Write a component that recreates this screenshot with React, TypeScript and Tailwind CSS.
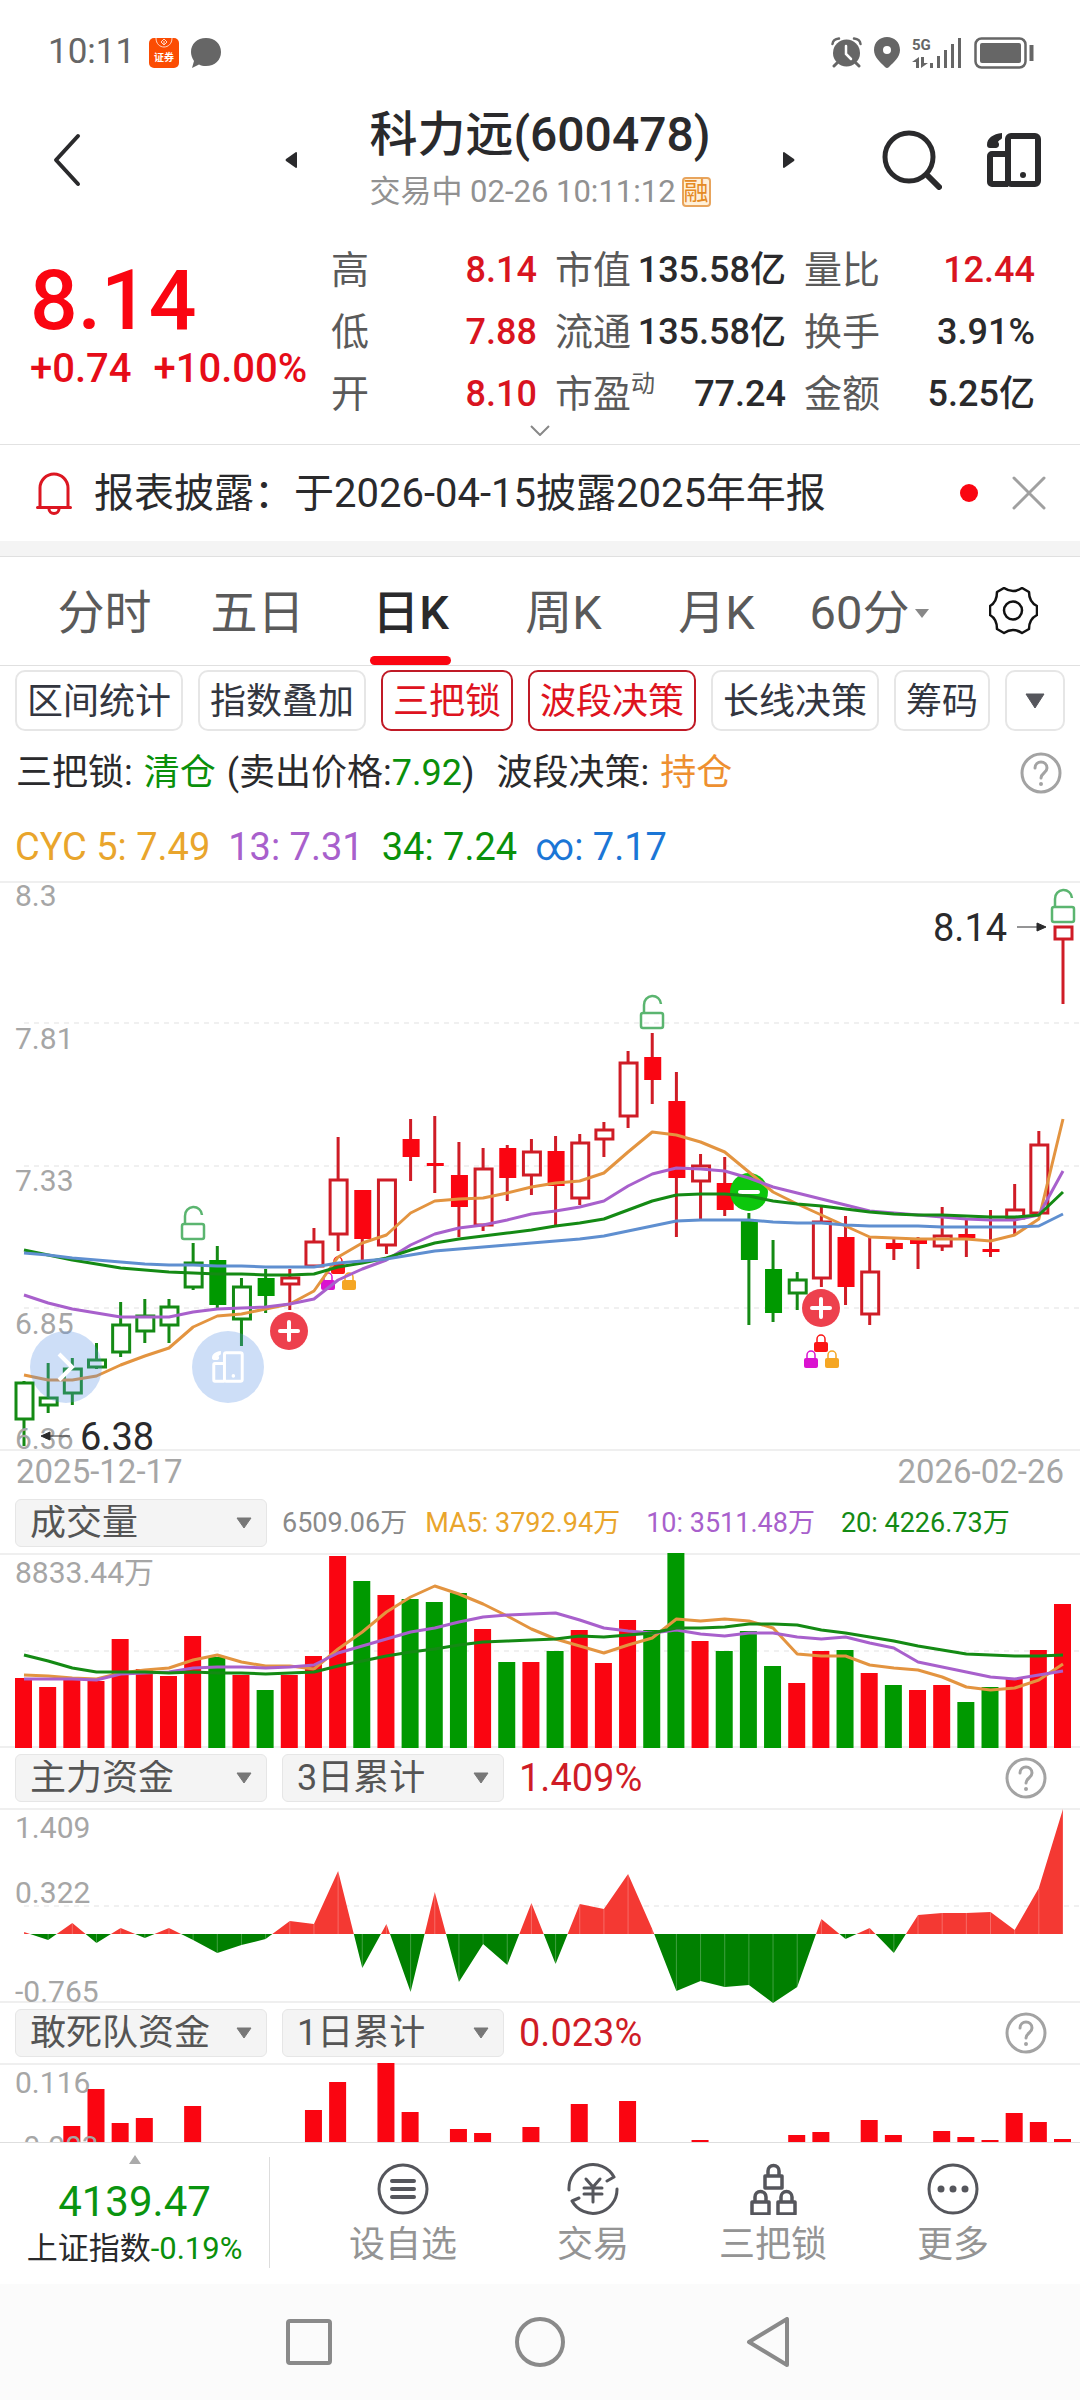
import type { ReactNode } from "react";

const RED = "#fa0511";
const RED_LINE = "#cf1c26";
const GREEN = "#009900";
const GREEN_LINE = "#148a14";
const ORANGE = "#e39440";
const PURPLE = "#a860cc";
const BLUE = "#5f8fd0";

// x of the n-th trading day
const dayX = (i: number) => 24 + (i * 1039) / 43;

type Candle = [kind: string, high: number, top: number, bottom: number, low: number];

// r/g = colour, h = hollow, f = filled
const candles: Candle[] = [
  ["gh", 500, 501, 539, 565],
  ["gh", 482, 516, 525, 532],
  ["gh", 477, 487, 513, 524],
  ["gh", 462, 478, 487, 488],
  ["gh", 421, 443, 472, 476],
  ["gh", 418, 434, 451, 462],
  ["gh", 418, 425, 445, 462],
  ["gh", 362, 381, 407, 409],
  ["gf", 365, 379, 424, 427],
  ["gh", 397, 405, 439, 465],
  ["gf", 388, 397, 415, 432],
  ["rh", 388, 396, 404, 429],
  ["rh", 347, 360, 386, 386],
  ["rh", 256, 298, 354, 370],
  ["rf", 309, 309, 358, 379],
  ["rh", 298, 298, 365, 373],
  ["rf", 238, 258, 276, 300],
  ["rf", 235, 282, 285, 312],
  ["rf", 261, 294, 326, 356],
  ["rh", 267, 287, 345, 350],
  ["rf", 264, 267, 297, 320],
  ["rh", 258, 270, 295, 314],
  ["rf", 255, 270, 305, 345],
  ["rh", 253, 261, 318, 324],
  ["rh", 241, 248, 259, 276],
  ["rh", 170, 181, 236, 247],
  ["rf", 152, 176, 199, 223],
  ["rf", 191, 220, 297, 356],
  ["rh", 273, 284, 301, 340],
  ["rf", 276, 302, 329, 335],
  ["gf", 332, 340, 379, 444],
  ["gf", 359, 388, 432, 441],
  ["gh", 391, 398, 413, 429],
  ["rh", 326, 340, 398, 406],
  ["rf", 335, 356, 406, 424],
  ["rh", 357, 390, 434, 444],
  ["rf", 357, 362, 368, 379],
  ["rf", 356, 358, 363, 388],
  ["rh", 326, 354, 366, 370],
  ["rf", 338, 353, 357, 376],
  ["rf", 329, 368, 371, 376],
  ["rh", 303, 328, 338, 354],
  ["rh", 250, 263, 333, 333],
  ["rh", 45, 45, 59, 123],
];

const cyc5 = [494, 499, 499, 495, 484, 475, 467, 446, 435, 433, 428, 423, 410, 376, 362, 354, 332, 320, 318, 317, 312, 306, 302, 300, 292, 271, 251, 254, 261, 271, 291, 311, 323, 334, 345, 356, 357, 358, 358, 358, 360, 354, 338, 238];
const cyc13 = [414, 422, 428, 432, 436, 436, 436, 431, 428, 427, 426, 423, 418, 399, 388, 379, 364, 353, 347, 344, 339, 333, 330, 326, 320, 305, 293, 287, 288, 290, 297, 306, 312, 318, 324, 330, 332, 334, 336, 338, 339, 339, 334, 290];
const cyc34 = [369, 374, 379, 383, 387, 389, 391, 392, 393, 393, 394, 394, 393, 386, 382, 377, 369, 362, 358, 355, 352, 349, 345, 342, 338, 329, 320, 314, 313, 313, 315, 320, 323, 325, 328, 331, 333, 334, 334, 335, 336, 336, 334, 311];
const cycInf = [372, 374, 377, 379, 381, 383, 384, 384, 385, 385, 386, 386, 386, 382, 380, 378, 374, 370, 368, 366, 364, 362, 360, 358, 355, 350, 345, 340, 339, 339, 339, 341, 342, 342, 344, 345, 345, 345, 346, 346, 346, 346, 345, 333];

const volume = [125, 134, 127, 128, 86, 116, 123, 83, 104, 122, 137, 122, 103, 3, 28, 42, 46, 49, 40, 76, 109, 109, 98, 77, 110, 67, 77, 0, 88, 98, 78, 113, 130, 98, 97, 120, 132, 137, 132, 149, 134, 126, 97, 51];
const volumeDown = [8, 10, 14, 16, 17, 18, 20, 22, 26, 27, 29, 30, 31, 34, 36, 39, 40];
const ma5 = [122, 123, 125, 126, 120, 117, 115, 107, 102, 109, 113, 113, 116, 96, 79, 59, 44, 33, 41, 51, 63, 76, 86, 93, 100, 92, 85, 66, 68, 66, 68, 75, 101, 103, 103, 112, 115, 117, 124, 134, 137, 135, 127, 111];
const ma10 = [126, 126, 126, 127, 121, 120, 119, 115, 114, 114, 115, 114, 112, 100, 93, 86, 79, 75, 69, 64, 62, 61, 60, 67, 75, 78, 80, 77, 81, 83, 80, 80, 84, 86, 84, 90, 95, 109, 114, 119, 124, 126, 122, 118];
const ma20 = [102, 108, 115, 119, 119, 119, 120, 119, 120, 120, 121, 120, 119, 113, 108, 103, 99, 96, 92, 89, 88, 87, 86, 83, 84, 82, 80, 75, 75, 74, 71, 71, 72, 77, 80, 84, 88, 93, 97, 101, 102, 103, 103, 102];

const mainFunds = [124, 132, 115, 135, 120, 130, 120, 132, 145, 137, 131, 113, 116, 63, 160, 116, 184, 84, 174, 136, 157, 95, 156, 96, 101, 66, 121, 183, 173, 179, 177, 195, 179, 111, 131, 120, 145, 107, 105, 105, 104, 122, 80, 1];

const squadFunds: [day: number, top: number][] = [
  [2, 63], [3, 26], [4, 60], [5, 55], [7, 43], [12, 47], [13, 19], [15, 0], [16, 49],
  [18, 66], [19, 70], [21, 64], [23, 41], [25, 38], [28, 77], [32, 72], [33, 69],
  [35, 57], [36, 72], [38, 68], [39, 74], [40, 77], [41, 50], [42, 59], [43, 76],
];

const toPoints = (ys: number[]) => ys.map((y, i) => `${dayX(i)},${y}`).join(" ");

function Curve({ ys, color }: { ys: number[]; color: string }) {
  return <polyline points={toPoints(ys)} fill="none" stroke={color} strokeWidth="3" strokeLinejoin="round" />;
}

function Rule({ y, dashed = false }: { y: number; dashed?: boolean }) {
  return (
    <line
      x1={dashed ? 24 : 0}
      x2="1080"
      y1={y}
      y2={y}
      stroke={dashed ? "#f0f0f0" : "#efefef"}
      strokeWidth="2"
      strokeDasharray={dashed ? "5 5" : undefined}
    />
  );
}

function AxisText({ y, children }: { y: number; children: ReactNode }) {
  return (
    <text x="15" y={y} className="fill-[#a6a6a6] text-[30px]">
      {children}
    </text>
  );
}

function OpenLock({ x, y }: { x: number; y: number }) {
  return (
    <g transform={`translate(${x - 12} ${y})`} fill="none" stroke="#5bb570" strokeWidth="2.500">
      <rect x="1" y="18" width="22" height="15" rx="2" />
      <path d="M4 18V10a8.500 8.500 0 0 1 17 -1" />
    </g>
  );
}

function TinyLock({ x, y, color }: { x: number; y: number; color: string }) {
  return (
    <g transform={`translate(${x - 7} ${y})`}>
      <path d="M3 9V6a4 4 0 0 1 8 0v3" fill="none" stroke={color} strokeWidth="1.500" />
      <rect y="9" width="14" height="10" rx="2" fill={color} />
    </g>
  );
}

function ThreeLocks({ x, y }: { x: number; y: number }) {
  return (
    <>
      <TinyLock x={x} y={y} color="#fb1414" />
      <TinyLock x={x - 10} y={y + 16} color="#da12d0" />
      <TinyLock x={x + 11} y={y + 16} color="#f5a623" />
    </>
  );
}

function TradeMark({ x, y, buy }: { x: number; y: number; buy: boolean }) {
  return (
    <g stroke="#fff" strokeWidth="4" strokeLinecap="round">
      <circle cx={x} cy={y} r="19" fill={buy ? "#ed404d" : "#0cc70c"} stroke="none" />
      <path d={`M${x - 9} ${y}h18`} />
      {buy && <path d={`M${x} ${y - 9}v18`} />}
    </g>
  );
}

function CandleShape({ data: [kind, high, top, bottom, low], x }: { data: Candle; x: number }) {
  const green = kind[0] === "g";
  const hollow = kind[1] === "h";
  const line = green ? GREEN_LINE : RED_LINE;
  return (
    <g>
      <path d={`M${x} ${high}V${top}M${x} ${bottom}V${low}`} stroke={line} strokeWidth="3" />
      {hollow ? (
        <rect x={x - 8} y={top + 1} width="17" height={bottom - top - 2} fill="none" stroke={line} strokeWidth="3" />
      ) : (
        <rect x={x - 8} y={top} width="17" height={bottom - top} fill={green ? GREEN : RED} />
      )}
    </g>
  );
}

function PriceChart() {
  return (
    <svg viewBox="0 0 1080 570" className="block w-full">
      <Rule y={1} />
      <Rule y={142} dashed />
      <Rule y={285} dashed />
      <Rule y={427} dashed />
      <Rule y={569} />
      <AxisText y={25}>8.3</AxisText>
      <AxisText y={168}>7.81</AxisText>
      <AxisText y={310}>7.33</AxisText>
      <AxisText y={453}>6.85</AxisText>
      {candles.map((c, i) => (
        <CandleShape key={i} data={c} x={dayX(i)} />
      ))}
      <OpenLock x={193} y={325} />
      <OpenLock x={652} y={114} />
      <OpenLock x={1063} y={8} />
      <ThreeLocks x={338} y={374} />
      <ThreeLocks x={821} y={452} />
      <TradeMark x={289} y={450} buy />
      <TradeMark x={821} y={427} buy />
      <TradeMark x={749} y={311} buy={false} />
      <Curve ys={cyc5} color={ORANGE} />
      <Curve ys={cyc13} color={PURPLE} />
      <Curve ys={cyc34} color={GREEN_LINE} />
      <Curve ys={cycInf} color={BLUE} />
      <AxisText y={568}>6.36</AxisText>
      <g fill="#2a2a2c" stroke="#2a2a2c">
        <path d="M50 555h20M1017 46h20" />
        <path d="M41 555l9-4v8zM1046 46l-9-4v8z" />
      </g>
      <text x="80" y="569" className="fill-[#2a2a2c] text-[38px]">6.38</text>
      <text x="933" y="60" className="fill-[#2a2a2c] text-[38px]">8.14</text>
    </svg>
  );
}

function VolumeChart() {
  return (
    <svg viewBox="0 0 1080 195" className="block w-full">
      <Rule y={1} />
      <Rule y={98} dashed />
      <Rule y={194} />
      <AxisText y={30}>8833.44万</AxisText>
      {volume.map((top, i) => (
        <rect key={i} x={dayX(i) - 9} y={top} width="17" height={195 - top} fill={volumeDown.includes(i) ? GREEN : RED} />
      ))}
      <Curve ys={ma5} color={ORANGE} />
      <Curve ys={ma10} color={PURPLE} />
      <Curve ys={ma20} color={GREEN_LINE} />
    </svg>
  );
}

function MainFundsChart() {
  const area = `${dayX(0)},126 ${toPoints(mainFunds)} ${dayX(43)},126`;
  return (
    <svg viewBox="0 0 1080 195" className="block w-full">
      <clipPath id="inflow">
        <rect width="1080" height="126" />
      </clipPath>
      <clipPath id="outflow">
        <rect y="126" width="1080" height="69" />
      </clipPath>
      <Rule y={1} />
      <Rule y={98} dashed />
      <Rule y={194} />
      <polygon points={area} fill="#f43933" clipPath="url(#inflow)" />
      <polygon points={area} fill="#008000" clipPath="url(#outflow)" />
      {mainFunds.map((y, i) => (
        <path key={i} d={`M${dayX(i)} ${y}V126`} stroke="#fff" strokeOpacity="0.25" />
      ))}
      <AxisText y={30}>1.409</AxisText>
      <AxisText y={95}>0.322</AxisText>
      <AxisText y={194}>-0.765</AxisText>
    </svg>
  );
}

function SquadChart() {
  return (
    <svg viewBox="0 0 1080 79" className="block w-full overflow-hidden">
      <Rule y={1} />
      {squadFunds.map(([day, top]) => (
        <rect key={day} x={dayX(day) - 9} y={top} width="17" height={79 - top} fill={RED} />
      ))}
      <AxisText y={30}>0.116</AxisText>
      <AxisText y={94}>-0.003</AxisText>
    </svg>
  );
}

function LayoutIcon({ className, width }: { className: string; width: number }) {
  return (
    <svg viewBox="0 0 54 54" className={className} fill="none" stroke="currentColor" strokeWidth={width} strokeLinejoin="round">
      <rect x="21" y="3" width="30" height="48" rx="3" />
      <path d="M21 21H5a2 2 0 0 0-2 2v26a2 2 0 0 0 2 2h16" />
      <circle cx="36" cy="42" r="3" fill="currentColor" stroke="none" />
      <path d="M15 0C6 1 0 5 0 12c0 2 1 3 3 3h6c3 0 4-4 2-6 1-2 4-3 4-4z" fill="currentColor" stroke="none" />
    </svg>
  );
}

function HelpButton({ className }: { className: string }) {
  return (
    <button aria-label="说明" className={className}>
      <svg viewBox="0 0 42 42" className="block w-full" fill="none" stroke="#a3a3a3" strokeWidth="3" strokeLinecap="round">
        <circle cx="21" cy="21" r="19" />
        <path d="M15 16c0-8 12-8 12 0 0 5-6 5-6 10" />
        <circle cx="21" cy="32" r="1" fill="#a3a3a3" stroke="#a3a3a3" strokeWidth="2" />
      </svg>
    </button>
  );
}

function Dropdown({ label, value, className }: { label: string; value: string; className: string }) {
  return (
    <div className={`relative h-12 shrink-0 ${className}`}>
      <select
        aria-label={label}
        className="block h-full w-full appearance-none rounded-md border border-[#e6e6e6] bg-[#f4f4f4] pl-[14px] text-4xl leading-none text-[#555]"
      >
        <option>{value}</option>
      </select>
      <svg viewBox="0 0 16 12" className="pointer-events-none absolute top-[18px] right-[15px] w-4">
        <path d="M1 1h14L8 11z" fill="#777" stroke="#777" strokeLinejoin="round" />
      </svg>
    </div>
  );
}

function StatusBar() {
  return (
    <div className="flex h-[105px] items-center justify-between pr-[46px] pl-[48px] text-[#666]">
      <div className="flex items-center">
        <span className="text-[35px]">10:11</span>
        <svg viewBox="0 0 30 30" className="ml-[14px] w-[30px]">
          <rect width="30" height="30" rx="5" fill="#fb4c02" />
          <path d="M7 0c0 12 16 12 16 0" fill="none" stroke="#ffd9c8" />
          <path d="M15 1l3 3-3 3-3-3zM15 3v4" fill="none" stroke="#ffd9c8" />
          <text x="15" y="23" textAnchor="middle" className="fill-white text-[10px] font-bold">证券</text>
        </svg>
        <svg viewBox="0 0 30 30" className="ml-3 w-[30px]" fill="currentColor">
          <path d="M15 0c9 0 15 6 15 14s-6 14-15 14c-3 0-5-.5-7-1.500L1 30l2-7C1 20 0 17 0 14 0 6 6 0 15 0z" />
        </svg>
      </div>
      <div className="flex items-center gap-[12px]">
        <svg viewBox="0 0 31 31" className="w-[31px]" fill="currentColor" stroke="currentColor" strokeLinecap="round">
          <circle cx="15.500" cy="16" r="13.500" stroke="none" />
          <path d="M1.500 7Q2 2 8 1.500M29.500 7Q29 2 23 1.500" fill="none" strokeWidth="2.500" />
          <path d="M6 26l-3 3M25 26l3 3" strokeWidth="3" />
          <path d="M15 9v8l5 5" fill="none" stroke="#fff" strokeWidth="2.500" />
        </svg>
        <svg viewBox="0 0 26 31" className="w-[26px]" fill="currentColor">
          <path fillRule="evenodd" d="M13 0c7 0 13 5 13 13 0 7-6 12-11 17q-2 2-4 0C6 25 0 20 0 13 0 5 6 0 13 0zm0 9a4 4 0 1 0 0 8 4 4 0 0 0 0-8z" />
        </svg>
        <svg viewBox="0 0 50 32" className="w-[50px]" fill="currentColor">
          <text x="0" y="13" className="text-[15px] font-bold">5G</text>
          <path d="M7 20v11H4v-6H0zM9 20h3v6h4l-7 5z" />
          <path d="M18 26h3v5h-3zM25 19h3v12h-3zM32 13h3v18h-3zM39 7h3v24h-3zM46 1h3v30h-3z" />
        </svg>
        <svg viewBox="0 0 60 32" className="w-[60px]" fill="none" stroke="currentColor">
          <rect x="1.500" y="1.500" width="50" height="29" rx="6" strokeWidth="2.500" />
          <rect x="6" y="6" width="41" height="20" rx="2" fill="currentColor" stroke="none" />
          <path d="M57.500 8v16" strokeWidth="4" />
        </svg>
      </div>
    </div>
  );
}

function Header() {
  return (
    <header className="flex h-[110px] items-center justify-between pr-[39px] pl-[50px] text-[#2a2a2c]">
      <button aria-label="返回" className="w-[148px]">
        <svg viewBox="0 0 32 54" className="w-8" fill="none" stroke="currentColor" strokeWidth="4" strokeLinecap="round" strokeLinejoin="round">
          <path d="M28 3L6 27l22 24" />
        </svg>
      </button>
      <div className="flex items-center">
        <button aria-label="上一只">
          <svg viewBox="0 0 12 16" className="w-3" fill="currentColor">
            <path d="M12 1v14q0 1-1 1L1 9q-1-1 0-2L11 0q1 0 1 1z" />
          </svg>
        </button>
        <div className="mx-[72px] flex flex-col items-center">
          <h1 className="text-[48px] leading-[64px] font-medium">科力远(600478)</h1>
          <p className="flex items-center gap-[6px] text-[31px] leading-[50px] whitespace-nowrap text-[#919191]">
            交易中 02-26 10:11:12
            <span className="rounded-sm border-2 border-[#e8a45c] bg-[#fff0d9] text-[25px] leading-[26px] text-[#e58a25]">融</span>
          </p>
        </div>
        <button aria-label="下一只">
          <svg viewBox="0 0 12 16" className="w-3" fill="currentColor">
            <path d="M0 1v14q0 1 1 1l10-7q1-1 0-2L1 0Q0 0 0 1z" />
          </svg>
        </button>
      </div>
      <div className="flex items-center gap-[45px]">
        <button aria-label="搜索">
          <svg viewBox="0 0 60 60" className="w-[60px]" fill="none" stroke="currentColor" strokeWidth="5" strokeLinecap="round">
            <circle cx="27" cy="27" r="24" />
            <path d="M46 46l11 11" strokeWidth="6" />
          </svg>
        </button>
        <button aria-label="切换布局">
          <LayoutIcon className="w-[54px]" width={6} />
        </button>
      </div>
    </header>
  );
}

type Stat = { label: string; note?: string; value: string; up?: boolean };

const statColumns: Stat[][] = [
  [
    { label: "高", value: "8.14", up: true },
    { label: "低", value: "7.88", up: true },
    { label: "开", value: "8.10", up: true },
  ],
  [
    { label: "市值", value: "135.58亿" },
    { label: "流通", value: "135.58亿" },
    { label: "市盈", note: "动", value: "77.24" },
  ],
  [
    { label: "量比", value: "12.44", up: true },
    { label: "换手", value: "3.91%" },
    { label: "金额", value: "5.25亿" },
  ],
];

function Quote() {
  return (
    <section className="border-b border-[#e2e2e2]">
      <div className="flex justify-between pt-[24px] pr-[45px] pl-[30px] font-medium whitespace-nowrap">
        <div className="text-[#e60c18]">
          <div className="pt-[16px] text-[84px] leading-[91px] text-[#fa0511]">8.14</div>
          <div className="flex gap-[22px] text-[40px] leading-[46px]">
            <span>+0.74</span>
            <span>+10.00%</span>
          </div>
        </div>
        <div className="flex gap-[18px]">
          {statColumns.map((column, i) => (
            <dl key={i} className={i === 0 ? "w-[206px]" : "w-[231px]"}>
              {column.map((s) => (
                <div key={s.label} className="flex h-[62px] items-center justify-between">
                  <dt className="flex text-[38px] font-normal text-[#5a5a5a]">
                    {s.label}
                    {s.note && <sup className="top-0 pt-[6px] text-2xl leading-6">{s.note}</sup>}
                  </dt>
                  <dd className={`text-4xl ${s.up ? "text-[#d9141f]" : "text-[#2a2a2c]"}`}>{s.value}</dd>
                </div>
              ))}
            </dl>
          ))}
        </div>
      </div>
      <button aria-label="展开" className="mx-auto mb-[8px] block h-[11px] w-[20px]">
        <svg viewBox="0 0 20 11" className="block" fill="none" stroke="#888" strokeWidth="2">
          <path d="M1 1l9 9 9-9" />
        </svg>
      </button>
    </section>
  );
}

function Notice() {
  return (
    <div className="flex h-[96px] items-center pr-[34px] pl-[36px]">
      <svg viewBox="0 0 36 43" className="w-9" fill="none" stroke="#dc1621" strokeWidth="3" strokeLinecap="round">
        <path d="M4 35V16a14 14 0 0 1 28 0v19M1.500 35.500h33" />
        <path d="M13 37a5 4.500 0 0 0 10 0" />
      </svg>
      <a href="#notice" className="ml-[22px] flex-1 pt-[2px] text-[40px] whitespace-nowrap text-[#2a2a2c]">
        报表披露：于2026-04-15披露2025年年报
      </a>
      <span className="h-[18px] w-[18px] rounded-full bg-[#fa0511]" />
      <button aria-label="关闭" className="ml-[34px]">
        <svg viewBox="0 0 34 34" className="w-[34px]" stroke="#a0a0a0" strokeWidth="3" strokeLinecap="round">
          <path d="M2 2l30 30M32 2L2 32" />
        </svg>
      </button>
    </div>
  );
}

function PeriodTabs() {
  const tabs = ["分时", "五日", "日K", "周K", "月K"];
  return (
    <nav className="flex h-[110px] items-stretch border-y border-[#e0e0e0] pl-[28px] text-[47px] text-[#5a5a5a]">
      {tabs.map((tab) =>
        tab === "日K" ? (
          <button key={tab} className="relative flex-1 pt-[4px] font-medium text-[#2a2a2c]">
            {tab}
            <span className="absolute inset-x-[36px] bottom-0 h-[9px] rounded-full bg-[#fa0511]" />
          </button>
        ) : (
          <button key={tab} className="flex-1 pt-[4px]">
            {tab}
          </button>
        ),
      )}
      <button className="flex flex-1 items-center justify-center gap-1.5 pt-[4px]">
        60分
        <svg viewBox="0 0 14 9" className="w-[14px]">
          <path d="M0 0h14L7 9z" fill="#888" />
        </svg>
      </button>
      <button aria-label="设置" className="flex w-[134px] items-center justify-center">
        <svg viewBox="0 0 49 48" className="w-[49px]" fill="none" stroke="#111" strokeWidth="2.500" strokeLinejoin="round">
          <path d="M15 1Q24 7 33 1L40 5Q40 15 48 19V28Q40 32 40 42L33 46Q24 40 15 46L8 42Q8 32 1 28V19Q8 15 8 5Z" />
          <circle cx="24" cy="23.500" r="9" />
        </svg>
      </button>
    </nav>
  );
}

function IndicatorChips() {
  const chips = [
    { name: "区间统计" },
    { name: "指数叠加" },
    { name: "三把锁", active: true },
    { name: "波段决策", active: true },
    { name: "长线决策" },
    { name: "筹码" },
  ];
  return (
    <div className="flex gap-[15px] px-[15px] pt-[4px] text-4xl">
      {chips.map((chip) => (
        <button
          key={chip.name}
          className={`h-[61px] rounded-[10px] border-2 px-[10px] pt-[3px] whitespace-nowrap ${
            chip.active ? "border-[#c01a26] text-[#de1320]" : "border-[#e6e6e6] text-[#33363f]"
          }`}
        >
          {chip.name}
        </button>
      ))}
      <button aria-label="更多指标" className="flex h-[61px] flex-1 items-center justify-center rounded-[10px] border-2 border-[#e6e6e6]">
        <svg viewBox="0 0 20 16" className="w-5">
          <path d="M1 1h18l-9 14z" fill="#55565c" stroke="#55565c" strokeLinejoin="round" />
        </svg>
      </button>
    </div>
  );
}

function Signals() {
  return (
    <>
      <div className="flex h-[84px] items-center gap-[11px] pr-[18px] pl-[16px] text-4xl whitespace-nowrap text-[#2a2a2c]">
        <span>三把锁:</span>
        <span className="text-[#0a900a]">清仓</span>
        <span>
          (卖出价格:<span className="text-[#0a900a]">7.92</span>)
        </span>
        <span className="ml-[11px]">波段决策:</span>
        <span className="flex-1 text-[#ee9030]">持仓</span>
        <HelpButton className="w-[42px]" />
      </div>
      <div className="flex h-[66px] items-center gap-[18px] px-[15px] pb-[2px] text-[38px]">
        <span className="text-[#e9a52c]">CYC 5: 7.49</span>
        <span className="text-[#a860cc]">13: 7.31</span>
        <span className="text-[#0a900a]">34: 7.24</span>
        <span className="text-[#1b76d6]">∞: 7.17</span>
      </div>
    </>
  );
}

function BottomBar() {
  const icon = "block w-[52px]";
  return (
    <footer className="flex h-[142px] items-stretch border-t border-[#dedede] bg-white">
      <a href="#index" className="flex w-[269px] flex-col items-center pt-[12px] whitespace-nowrap">
        <svg viewBox="0 0 12 9" className="w-3">
          <path d="M6 0l6 9H0z" fill="#aaa" />
        </svg>
        <span className="mt-[14px] text-[42px] leading-[48px] text-[#0a940f]">4139.47</span>
        <span className="mt-[1px] text-[31px] leading-[44px] text-[#2a2a2c]">
          上证指数<span className="text-[#0a900a]">-0.19%</span>
        </span>
      </a>
      <div className="mt-[14px] mb-[16px] w-px bg-[#ddd]" />
      <div className="mr-[37px] ml-[33px] grid flex-1 grid-cols-[10fr_9fr_9fr_9fr] pt-[20px] text-4xl leading-[60px] text-[#949494]">
        <button className="flex flex-col items-center">
          <svg viewBox="0 0 52 52" className={icon} fill="none" stroke="#55565c" strokeWidth="4" strokeLinecap="round">
            <circle cx="26" cy="26" r="24" strokeWidth="3" />
            <path d="M15 18h22M15 26h22M15 34h22" />
          </svg>
          设自选
        </button>
        <button className="flex flex-col items-center">
          <svg viewBox="0 0 52 52" className={icon} fill="none" stroke="#55565c" strokeWidth="3" strokeLinecap="round" strokeLinejoin="round">
            <path d="M2 27A24 24 0 0 1 47 14l-7 4M50 26A24 24 0 0 1 5 38l7-3" />
            <path d="M19 16l7 8 7-8M26 24v15M17 25h18M17 31h18" />
          </svg>
          交易
        </button>
        <button className="flex flex-col items-center">
          <svg viewBox="0 0 52 52" className={icon} fill="none" stroke="#55565c" strokeWidth="3.500" strokeLinejoin="round">
            <path d="M18 13h17v12H18zM21 13V8a5.500 5.500 0 0 1 11 0v5" />
            <path d="M5 39h17v12H5zM8 39v-5a5.500 5.500 0 0 1 11 0v5" />
            <path d="M31 39h17v12H31zM34 39v-5a5.500 5.500 0 0 1 11 0v5" />
          </svg>
          三把锁
        </button>
        <button className="flex flex-col items-center">
          <svg viewBox="0 0 52 52" className={icon} fill="#55565c">
            <circle cx="26" cy="26" r="24" fill="none" stroke="#55565c" strokeWidth="3" />
            <circle cx="14" cy="26" r="3.500" />
            <circle cx="26" cy="26" r="3.500" />
            <circle cx="38" cy="26" r="3.500" />
          </svg>
          更多
        </button>
      </div>
    </footer>
  );
}

function SystemNav() {
  return (
    <div className="flex h-[116px] items-center justify-center gap-[181px] bg-[#fbfbfb]">
      <button aria-label="最近任务">
        <svg viewBox="0 0 50 50" className="w-[50px]" fill="none" stroke="#8a8a8a" strokeWidth="4">
          <rect x="4" y="4" width="42" height="42" rx="2" />
        </svg>
      </button>
      <button aria-label="主页">
        <svg viewBox="0 0 50 50" className="w-[50px]" fill="none" stroke="#8a8a8a" strokeWidth="4">
          <circle cx="25" cy="25" r="23" />
        </svg>
      </button>
      <button aria-label="后退">
        <svg viewBox="0 0 50 50" className="w-[50px]" fill="none" stroke="#8a8a8a" strokeWidth="4" strokeLinejoin="round">
          <path d="M41 2v46L3 25z" />
        </svg>
      </button>
    </div>
  );
}

export default function App() {
  return (
    <main className="w-full bg-white font-[Roboto,'Noto_Sans_CJK_SC',sans-serif]">
      <StatusBar />
      <Header />
      <Quote />
      <Notice />
      <div className="h-[15px] bg-[#f4f4f4]" />
      <PeriodTabs />
      <IndicatorChips />
      <Signals />

      <div className="relative">
        <PriceChart />
        <button aria-label="收起" className="absolute bottom-[48px] left-[30px] flex h-[72px] w-[72px] items-center justify-center rounded-full bg-[#5a93e4]/30">
          <svg viewBox="0 0 20 30" className="w-5" fill="none" stroke="#fff" strokeWidth="4">
            <path d="M3 2l13 13L3 28" />
          </svg>
        </button>
        <button aria-label="横屏" className="absolute bottom-[48px] left-[192px] flex h-[72px] w-[72px] items-center justify-center rounded-full bg-[#5a93e4]/30 text-white">
          <LayoutIcon className="w-8" width={5} />
        </button>
      </div>
      <div className="flex h-[42px] items-center justify-between px-4 text-[33px] text-[#a6a6a6]">
        <span>2025-12-17</span>
        <span>2026-02-26</span>
      </div>

      <div className="flex h-[60px] items-center gap-[26px] px-[15px] text-[27px] whitespace-nowrap">
        <div className="-mr-2 flex items-center gap-[15px]">
          <Dropdown label="副图一" value="成交量" className="w-[252px]" />
          <span className="text-[#8a8a8a]">6509.06万</span>
        </div>
        <span className="text-[#e9a52c]">MA5: 3792.94万</span>
        <span className="text-[#a860cc]">10: 3511.48万</span>
        <span className="text-[#148a14]">20: 4226.73万</span>
      </div>
      <VolumeChart />

      <div className="flex h-[60px] items-center gap-[15px] pr-[33px] pl-[15px] text-[38px] text-[#cf1c26]">
        <Dropdown label="副图二" value="主力资金" className="w-[252px]" />
        <Dropdown label="主力资金周期" value="3日累计" className="w-[222px]" />
        <span className="flex-1">1.409%</span>
        <HelpButton className="w-[42px]" />
      </div>
      <MainFundsChart />

      <div className="flex h-[60px] items-center gap-[15px] pr-[33px] pl-[15px] text-[38px] text-[#cf1c26]">
        <Dropdown label="副图三" value="敢死队资金" className="w-[252px]" />
        <Dropdown label="敢死队资金周期" value="1日累计" className="w-[222px]" />
        <span className="flex-1">0.023%</span>
        <HelpButton className="w-[42px]" />
      </div>
      <SquadChart />

      <BottomBar />
      <SystemNav />
    </main>
  );
}
